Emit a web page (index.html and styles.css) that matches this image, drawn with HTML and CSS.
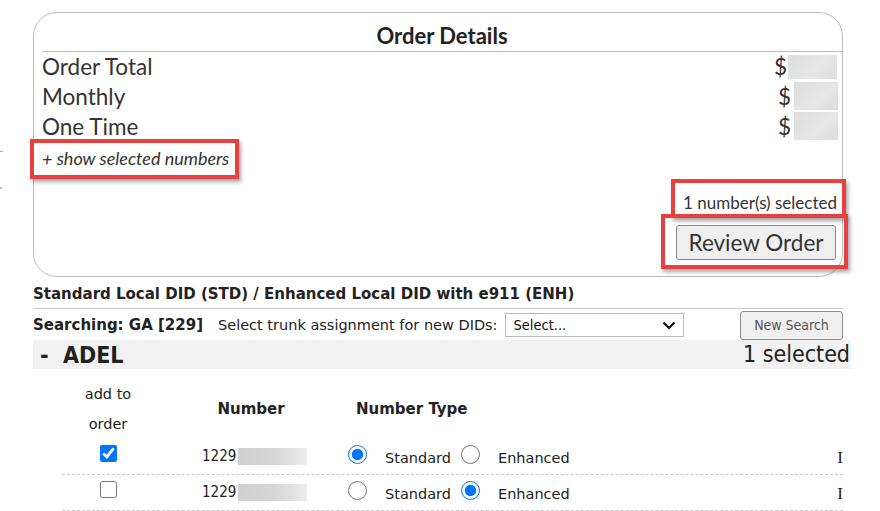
FILE: index.html
```html
<!DOCTYPE html>
<html>
<head>
<meta charset="utf-8">
<link rel="stylesheet" href="styles.css">
</head>
<body>
<div class="page">
  <div class="edge-mark edge-grey"></div>
  <div class="edge-mark edge-blue"></div>

  <section class="order-box">
    <h2 class="order-title">Order Details</h2>
    <div class="summary">
      <div class="sum-row"><span>Order Total</span><span class="val val-total"><span>$</span><i class="blur"></i></span></div>
      <div class="sum-row"><span>Monthly</span><span class="val"><span>$</span><i class="blur"></i></span></div>
      <div class="sum-row"><span>One Time</span><span class="val"><span>$</span><i class="blur"></i></span></div>
      <div class="show-link">+ show selected numbers</div>
      <div class="count">1 number(s) selected</div>
      <div class="review-wrap"><button class="review-btn">Review Order</button></div>
    </div>
  </section>

  <div class="did-title">Standard Local DID (STD) / Enhanced Local DID with e911 (ENH)</div>

  <div class="search-row">
    <span class="searching">Searching: GA [229]</span>
    <span class="trunk-label">Select trunk assignment for new DIDs:</span>
    <span class="select-wrap">
      <select class="trunk-select"><option>Select...</option></select>
      <svg class="chevron" width="14" height="9" viewBox="0 0 14 9"><path d="M1.5 1.5 L7 7 L12.5 1.5" fill="none" stroke="#111" stroke-width="2.2"/></svg>
    </span>
    <button class="new-search">New Search</button>
  </div>

  <div class="city-bar">
    <span class="city-name">-  ADEL</span>
    <span class="city-count">1 selected</span>
  </div>

  <div class="num-table">
    <div class="num-head">
      <div class="c-add">add to<br>order</div>
      <div class="c-num">Number</div>
      <div class="c-type">Number Type</div>
      <div class="c-end"></div>
    </div>
    <div class="num-row">
      <div class="c-add"><input type="checkbox" class="chk" checked></div>
      <div class="c-num"><span class="num-text">1229</span><i class="blur-num"></i></div>
      <div class="c-type">
        <input type="radio" class="rad" name="t1" checked><span class="rlabel">Standard</span>
        <input type="radio" class="rad" name="t1"><span class="rlabel">Enhanced</span>
      </div>
      <div class="c-end">I</div>
    </div>
    <div class="num-row">
      <div class="c-add"><input type="checkbox" class="chk"></div>
      <div class="c-num"><span class="num-text">1229</span><i class="blur-num"></i></div>
      <div class="c-type">
        <input type="radio" class="rad" name="t2"><span class="rlabel">Standard</span>
        <input type="radio" class="rad" name="t2" checked><span class="rlabel">Enhanced</span>
      </div>
      <div class="c-end">I</div>
    </div>
  </div>

  <div class="annot annot-show"></div>
  <div class="annot annot-count"></div>
  <div class="annot annot-review"></div>
</div>
</body>
</html>
```

FILE: styles.css
```css
* { box-sizing: border-box; }
html, body { margin: 0; padding: 0; background: #fff; }
body { width: 880px; height: 511px; overflow: hidden; }

.page {
  position: relative;
  padding: 12px 0 0 33px;
  width: 880px;
  height: 511px;
}

.edge-mark { position: absolute; left: 0; }
.edge-grey { top: 151px; width: 3px; height: 1px; background: #aaa; }
.edge-blue { top: 187px; width: 2px; height: 2px; background: #9cc3e6; }

.order-box {
  width: 810px;
  height: 265px;
  border: 1px solid #bdbdbd;
  border-radius: 24px;
  padding-left: 8px;
  font-family: Lato, "Open Sans", sans-serif;
  color: #333;
}

.order-title {
  margin: 0;
  height: 39px;
  padding-top: 10px;
  border-bottom: 1px solid #bdbdbd;
  text-align: center;
  font-size: 22px;
  font-weight: 700;
  line-height: 26px;
  color: #222;
}

.summary { padding-right: 4px; }

.sum-row {
  display: flex;
  justify-content: space-between;
  align-items: center;
  height: 30px;
  font-size: 22.5px;
  color: #333;
}
.sum-row:first-child { height: 29px; }

.val { display: flex; align-items: center; }
.blur {
  display: inline-block;
  width: 44px;
  height: 28px;
  background: linear-gradient(135deg, #dedede, #e6e6e6 60%, #dcdcdc);
  margin-left: 3px;
}
.val-total .blur { width: 49px; height: 24px; margin-left: 1px; margin-right: 1px; }

.show-link {
  font-style: italic;
  font-size: 18px;
  height: 34px;
  line-height: 34px;
  color: #333;
}

.count {
  text-align: right;
  font-size: 17px;
  margin-top: 18px;
  line-height: 20px;
  padding-right: 1px;
}

.review-wrap { display: flex; justify-content: flex-end; margin-top: 12px; padding-right: 2px; }
.review-btn {
  width: 160px;
  height: 35px;
  font-family: Lato, sans-serif;
  font-size: 22.5px;
  color: #333;
  background: #efefef;
  border: 1px solid #8a8a8a;
  border-radius: 3px;
  padding: 0;
}

.did-title {
  margin-top: 8px;
  font-family: "DejaVu Sans", sans-serif;
  font-weight: 700;
  font-size: 15px;
  color: #222;
  height: 19px;
  line-height: 19px;
}

.search-row {
  width: 810px;
  border-top: 1px solid #c6c6c6;
  margin-top: 4px;
  padding-top: 1px;
  display: flex;
  align-items: center;
  height: 32px;
  font-family: "DejaVu Sans", sans-serif;
  font-size: 14.5px;
  color: #222;
}
.searching { font-weight: 700; font-size: 15px; }
.trunk-label { margin-left: 15px; font-size: 14.5px; }
.select-wrap { position: relative; display: inline-flex; margin-left: 7px; }
.trunk-select {
  -webkit-appearance: none;
  appearance: none;
  width: 179px;
  height: 24px;
  font-family: "DejaVu Sans Condensed", "DejaVu Sans", sans-serif;
  font-size: 14.5px;
  color: #111;
  border: 1px solid #bbb;
  border-radius: 0;
  background: #fff;
  padding: 0 8px;
}
.chevron { position: absolute; right: 8px; top: 8px; pointer-events: none; }
.new-search {
  margin-left: auto;
  width: 103px;
  height: 29px;
  font-family: "DejaVu Sans Condensed", "DejaVu Sans", sans-serif;
  font-size: 14px;
  color: #555;
  background: #f0f0f0;
  border: 1px solid #8f8f8f;
  border-radius: 3px;
  padding: 0;
}

.city-bar {
  width: 818px;
  height: 29px;
  background: #f1f1f1;
  display: flex;
  justify-content: space-between;
  align-items: center;
  font-family: "DejaVu Sans Condensed", "DejaVu Sans", sans-serif;
  color: #222;
}
.city-name {
  white-space: pre;
  font-weight: 700;
  font-size: 23px;
  padding-left: 7px;
}
.city-count {
  font-size: 23px;
  padding-right: 1px;
  line-height: 29px;
}

.num-table {
  margin-left: 29px;
  width: 781px;
  margin-top: 10px;
  font-family: "DejaVu Sans", sans-serif;
  font-size: 14.5px;
  color: #222;
}
.num-head, .num-row {
  display: grid;
  grid-template-columns: 92px 194px 1fr 20px;
  align-items: center;
}
.num-head { height: 60px; line-height: 30px; }
.num-head .c-add { text-align: center; }
.num-head .c-num { text-align: center; font-weight: 700; font-size: 15px; }
.num-head .c-type { font-weight: 700; padding-left: 8px; font-size: 15px; }

.num-row {
  height: 36px;
  border-bottom: 1px dashed #c8c8c8;
}
.num-row .c-add { display: flex; justify-content: center; }
.chk {
  margin: 0;
  width: 17px;
  height: 17px;
  accent-color: #0075ff;
  position: relative;
  top: -3px;
}
.num-row .c-num { padding-left: 48px; display: flex; align-items: center; }
.num-text { position: relative; top: -1px; font-family: "DejaVu Sans Condensed", "DejaVu Sans", sans-serif; font-size: 15px; }
.blur-num {
  display: inline-block;
  width: 69px;
  height: 17px;
  margin-left: 2px;
  background: linear-gradient(90deg, #cfcfcf, #d6d6d6 55%, #ececec);
}
.num-row .c-type { display: flex; align-items: center; }
.rad {
  margin: 0;
  width: 19px;
  height: 19px;
  accent-color: #0075ff;
  position: relative;
  top: -2px;
}
.rlabel { margin-left: 18px; margin-right: 10px; position: relative; top: 1px; }
.c-end {
  font-family: "Liberation Serif", serif;
  font-size: 17px;
  text-align: right;
  position: relative;
  top: 1px;
}

.annot {
  position: absolute;
  border: 4px solid #e8403f;
  box-shadow: 2px 3px 4px rgba(0, 0, 0, 0.35);
}
.annot-show { left: 30px; top: 139px; width: 209px; height: 40px; }
.annot-count { left: 671px; top: 179px; width: 175px; height: 39px; }
.annot-review { left: 661px; top: 214px; width: 187px; height: 55px; }
```
